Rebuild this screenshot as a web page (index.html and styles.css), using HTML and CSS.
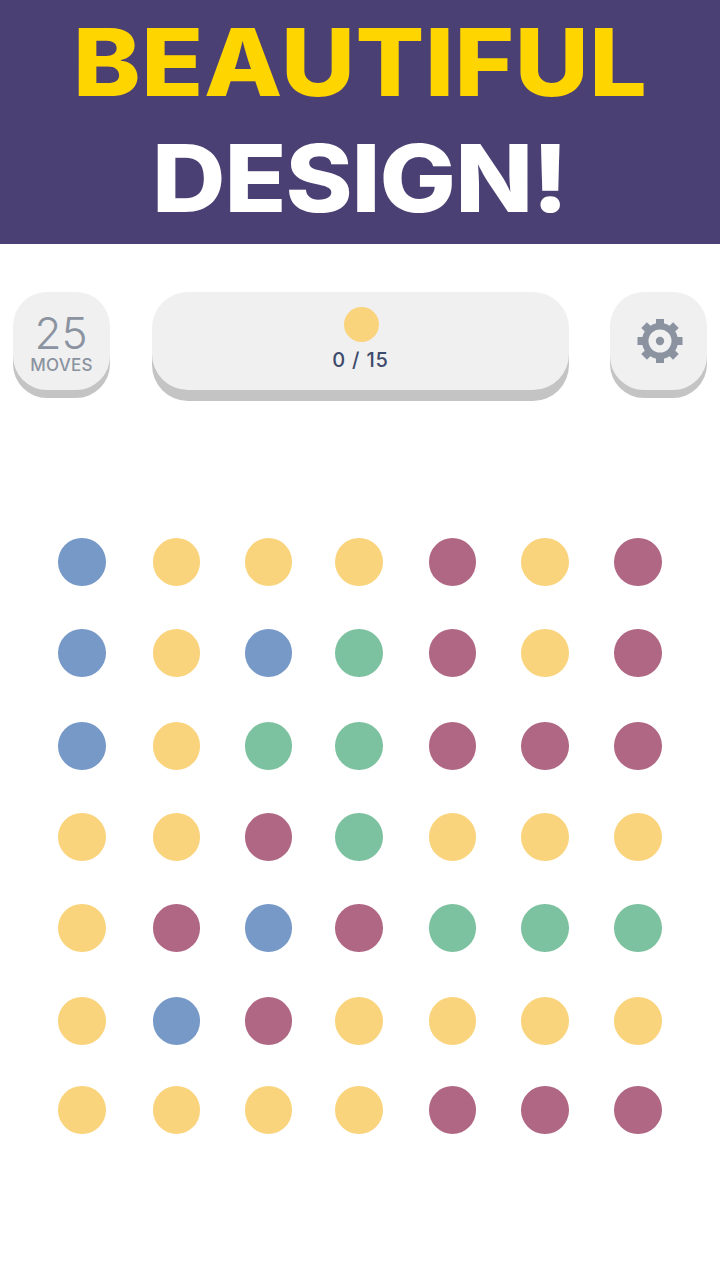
FILE: index.html
```html
<!DOCTYPE html>
<html lang="en">
<head>
<meta charset="utf-8">
<title>Beautiful Design</title>
<link rel="stylesheet" href="styles.css">
</head>
<body>
<header class="banner">
  <h1 class="line line-yellow">BEAUTIFUL</h1>
  <h1 class="line line-white">DESIGN!</h1>
</header>
<section class="hud">
  <div class="tile tile-moves">
    <div class="moves-num">25</div>
    <div class="moves-label">MOVES</div>
  </div>
  <div class="tile tile-goal">
    <span class="goal-dot"></span>
    <div class="goal-text">0 / 15</div>
  </div>
  <div class="tile tile-gear">
    <svg class="gear" viewBox="-23 -23 46 46" width="46" height="46">
      <g fill="#8b93a0">
        <rect x="-4" y="-22" width="8" height="8"/>
        <rect x="-4" y="-22.500" width="8" height="8" transform="rotate(45)"/>
        <rect x="-4" y="-22.500" width="8" height="8" transform="rotate(90)"/>
        <rect x="-4" y="-22.500" width="8" height="8" transform="rotate(135)"/>
        <rect x="-4" y="-22" width="8" height="8" transform="rotate(180)"/>
        <rect x="-4" y="-22.500" width="8" height="8" transform="rotate(225)"/>
        <rect x="-4" y="-22.500" width="8" height="8" transform="rotate(270)"/>
        <rect x="-4" y="-22.500" width="8" height="8" transform="rotate(315)"/>
        <circle r="4.200"/>
      </g>
      <circle r="14.750" fill="none" stroke="#8b93a0" stroke-width="6.500"/>
    </svg>
  </div>
</section>
<main class="board">
  <span class="dot b"></span><span class="dot y"></span><span class="dot y"></span><span class="dot y"></span><span class="dot m"></span><span class="dot y"></span><span class="dot m"></span>
  <span class="dot b"></span><span class="dot y"></span><span class="dot b"></span><span class="dot g"></span><span class="dot m"></span><span class="dot y"></span><span class="dot m"></span>
  <span class="dot b"></span><span class="dot y"></span><span class="dot g"></span><span class="dot g"></span><span class="dot m"></span><span class="dot m"></span><span class="dot m"></span>
  <span class="dot y"></span><span class="dot y"></span><span class="dot m"></span><span class="dot g"></span><span class="dot y"></span><span class="dot y"></span><span class="dot y"></span>
  <span class="dot y"></span><span class="dot m"></span><span class="dot b"></span><span class="dot m"></span><span class="dot g"></span><span class="dot g"></span><span class="dot g"></span>
  <span class="dot y"></span><span class="dot b"></span><span class="dot m"></span><span class="dot y"></span><span class="dot y"></span><span class="dot y"></span><span class="dot y"></span>
  <span class="dot y"></span><span class="dot y"></span><span class="dot y"></span><span class="dot y"></span><span class="dot m"></span><span class="dot m"></span><span class="dot m"></span>
</main>
</body>
</html>
```
FILE: styles.css
```css
* { box-sizing: border-box; }
html, body { margin: 0; padding: 0; }
body {
  width: 720px;
  height: 1280px;
  background: #fff;
  overflow: hidden;
  font-family: "Inter", "Liberation Sans", sans-serif;
}
.banner {
  height: 244px;
  background: #4b4074;
  padding-top: 4px;
  display: flex;
  flex-direction: column;
  align-items: center;
}
.line {
  margin: 0;
  height: 116px;
  line-height: 116px;
  font-size: 93px;
  font-weight: 800;
  text-align: center;
  letter-spacing: 0.500px;
  transform: scaleX(1.095);
}
.line-yellow { color: #ffd500; }
.line-white { color: #fff; letter-spacing: -1px; }
.hud {
  display: flex;
  align-items: flex-start;
  padding: 48px 13px 0;
  gap: 42px;
}
.tile {
  background: #f0f0f0;
  display: flex;
  flex-direction: column;
  align-items: center;
  border-radius: 34px;
  height: 98px;
  flex: none;
}
.tile-moves, .tile-gear {
  width: 97px;
  box-shadow: 0 8px 0 #c4c4c4;
}
.tile-gear { justify-content: center; margin-left: -1px; }
.tile-goal {
  width: 417px;
  box-shadow: 0 11px 0 #c4c4c4;
  padding-top: 15px;
  border-radius: 36px;
}
.moves-num {
  margin-top: 19px;
  margin-left: -1px;
  height: 44px;
  font-size: 44px;
  line-height: 44px;
  font-weight: 280;
  color: #8b93a0;
}
.moves-label {
  font-size: 17px;
  line-height: 20px;
  font-weight: 450;
  color: #8b93a0;
  letter-spacing: 0.300px;
}
.goal-dot {
  width: 35px;
  height: 35px;
  margin-left: 2px;
  border-radius: 50%;
  background: #f9d47c;
}
.goal-text {
  margin-top: 6px;
  font-size: 20px;
  line-height: 24px;
  font-weight: 500;
  color: #3c4a6b;
  letter-spacing: 0.800px;
}
.gear { margin-left: 2px; }
.board {
  margin-top: 148px;
  margin-left: 58.300px;
  display: grid;
  grid-template-columns: 94.400px 92.300px 90.500px 93.500px 92.500px 93px 48px;
  grid-template-rows: 91px 93px 91px 91px 93px 89px 48px;
}
.dot {
  width: 47.500px;
  height: 47.500px;
  border-radius: 50%;
}
.y { background: #f9d47c; }
.b { background: #7799c8; }
.m { background: #b06783; }
.g { background: #7dc2a0; }
```
